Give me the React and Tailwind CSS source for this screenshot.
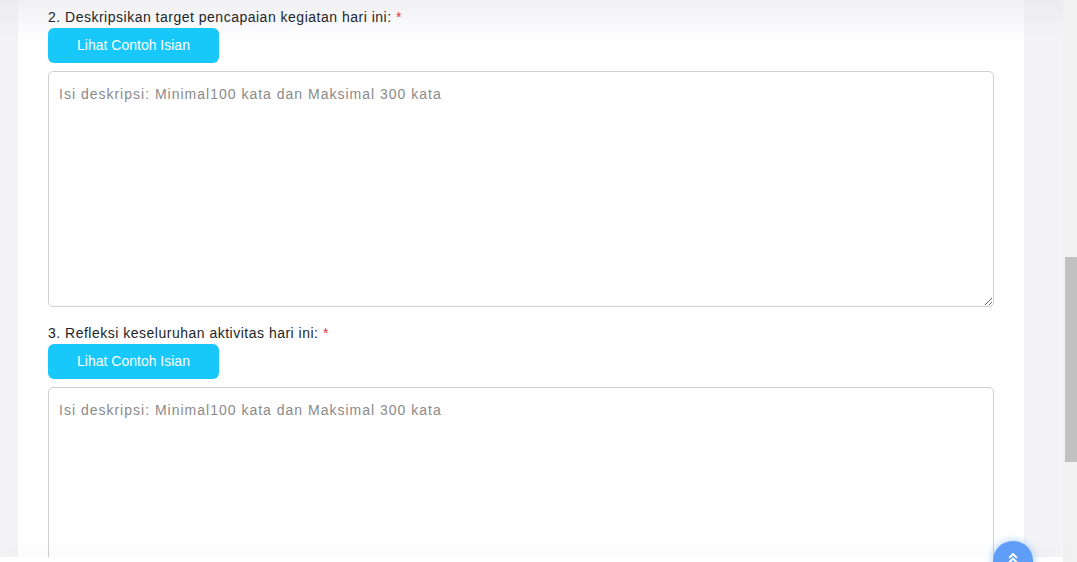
import React from "react";

const placeholder = "Isi deskripsi: Minimal100 kata dan Maksimal 300 kata";

function Question({ label, first }) {
  return (
    <div className={first ? "pt-[7px]" : "pt-[16px]"}>
      <p className="h-[20px] leading-[20px] text-[14px] tracking-[0.5px] text-[#212529]">
        {label} <span className="text-[#dc3545]">*</span>
      </p>
      <button className="mt-[1px] w-[171px] h-[35px] rounded-[6px] bg-[#18c8fa] text-white text-[14px]">
        Lihat Contoh Isian
      </button>
      <textarea
        className="mt-[8px] block w-[946px] h-[236px] rounded-[5px] border border-[#cfcfcf] bg-white px-[10px] py-[12px] text-[14px] tracking-[1px] placeholder:text-[#8a8a8a] outline-none"
        placeholder={placeholder}
      />
    </div>
  );
}

export default function App() {
  return (
    <div
      className="flex h-[562px] w-[1077px] overflow-hidden"
      style={{ fontFamily: '"Liberation Sans", Arial, sans-serif' }}
    >
      <div className="relative w-[1063px] h-full bg-[linear-gradient(to_bottom,#ebebf0,#f4f4f7_42px)]">
        <div className="ml-[18px] w-[1006px] h-full bg-[linear-gradient(to_bottom,#f0f0f4,#ffffff_42px)] px-[30px]">
          <Question first label="2. Deskripsikan target pencapaian kegiatan hari ini:" />
          <Question label="3. Refleksi keseluruhan aktivitas hari ini:" />
        </div>

        {/* footer bar */}
        <div className="absolute bottom-0 left-0 right-0 h-[5px] bg-white shadow-[0_-6px_16px_rgba(0,0,0,0.05)]" />

        {/* back to top */}
        <button className="absolute left-[993px] top-[541px] w-[40px] h-[40px] rounded-full bg-[#5e9ef9] shadow-[0_0_8px_rgba(94,158,249,0.6)] flex justify-center pt-[9px]">
          <svg width="16" height="16" viewBox="0 0 24 24" fill="none" stroke="white" strokeWidth="3" strokeLinecap="round" strokeLinejoin="round">
            <path d="m17 11-5-5-5 5" />
            <path d="m17 18-5-5-5 5" />
          </svg>
        </button>
      </div>

      {/* scrollbar */}
      <div className="w-[14px] h-full bg-[#f1f1f1] flex flex-col pl-[2px]">
        <div className="h-[257px]" />
        <div className="h-[205px] bg-[#c1c1c1]" />
      </div>
    </div>
  );
}
